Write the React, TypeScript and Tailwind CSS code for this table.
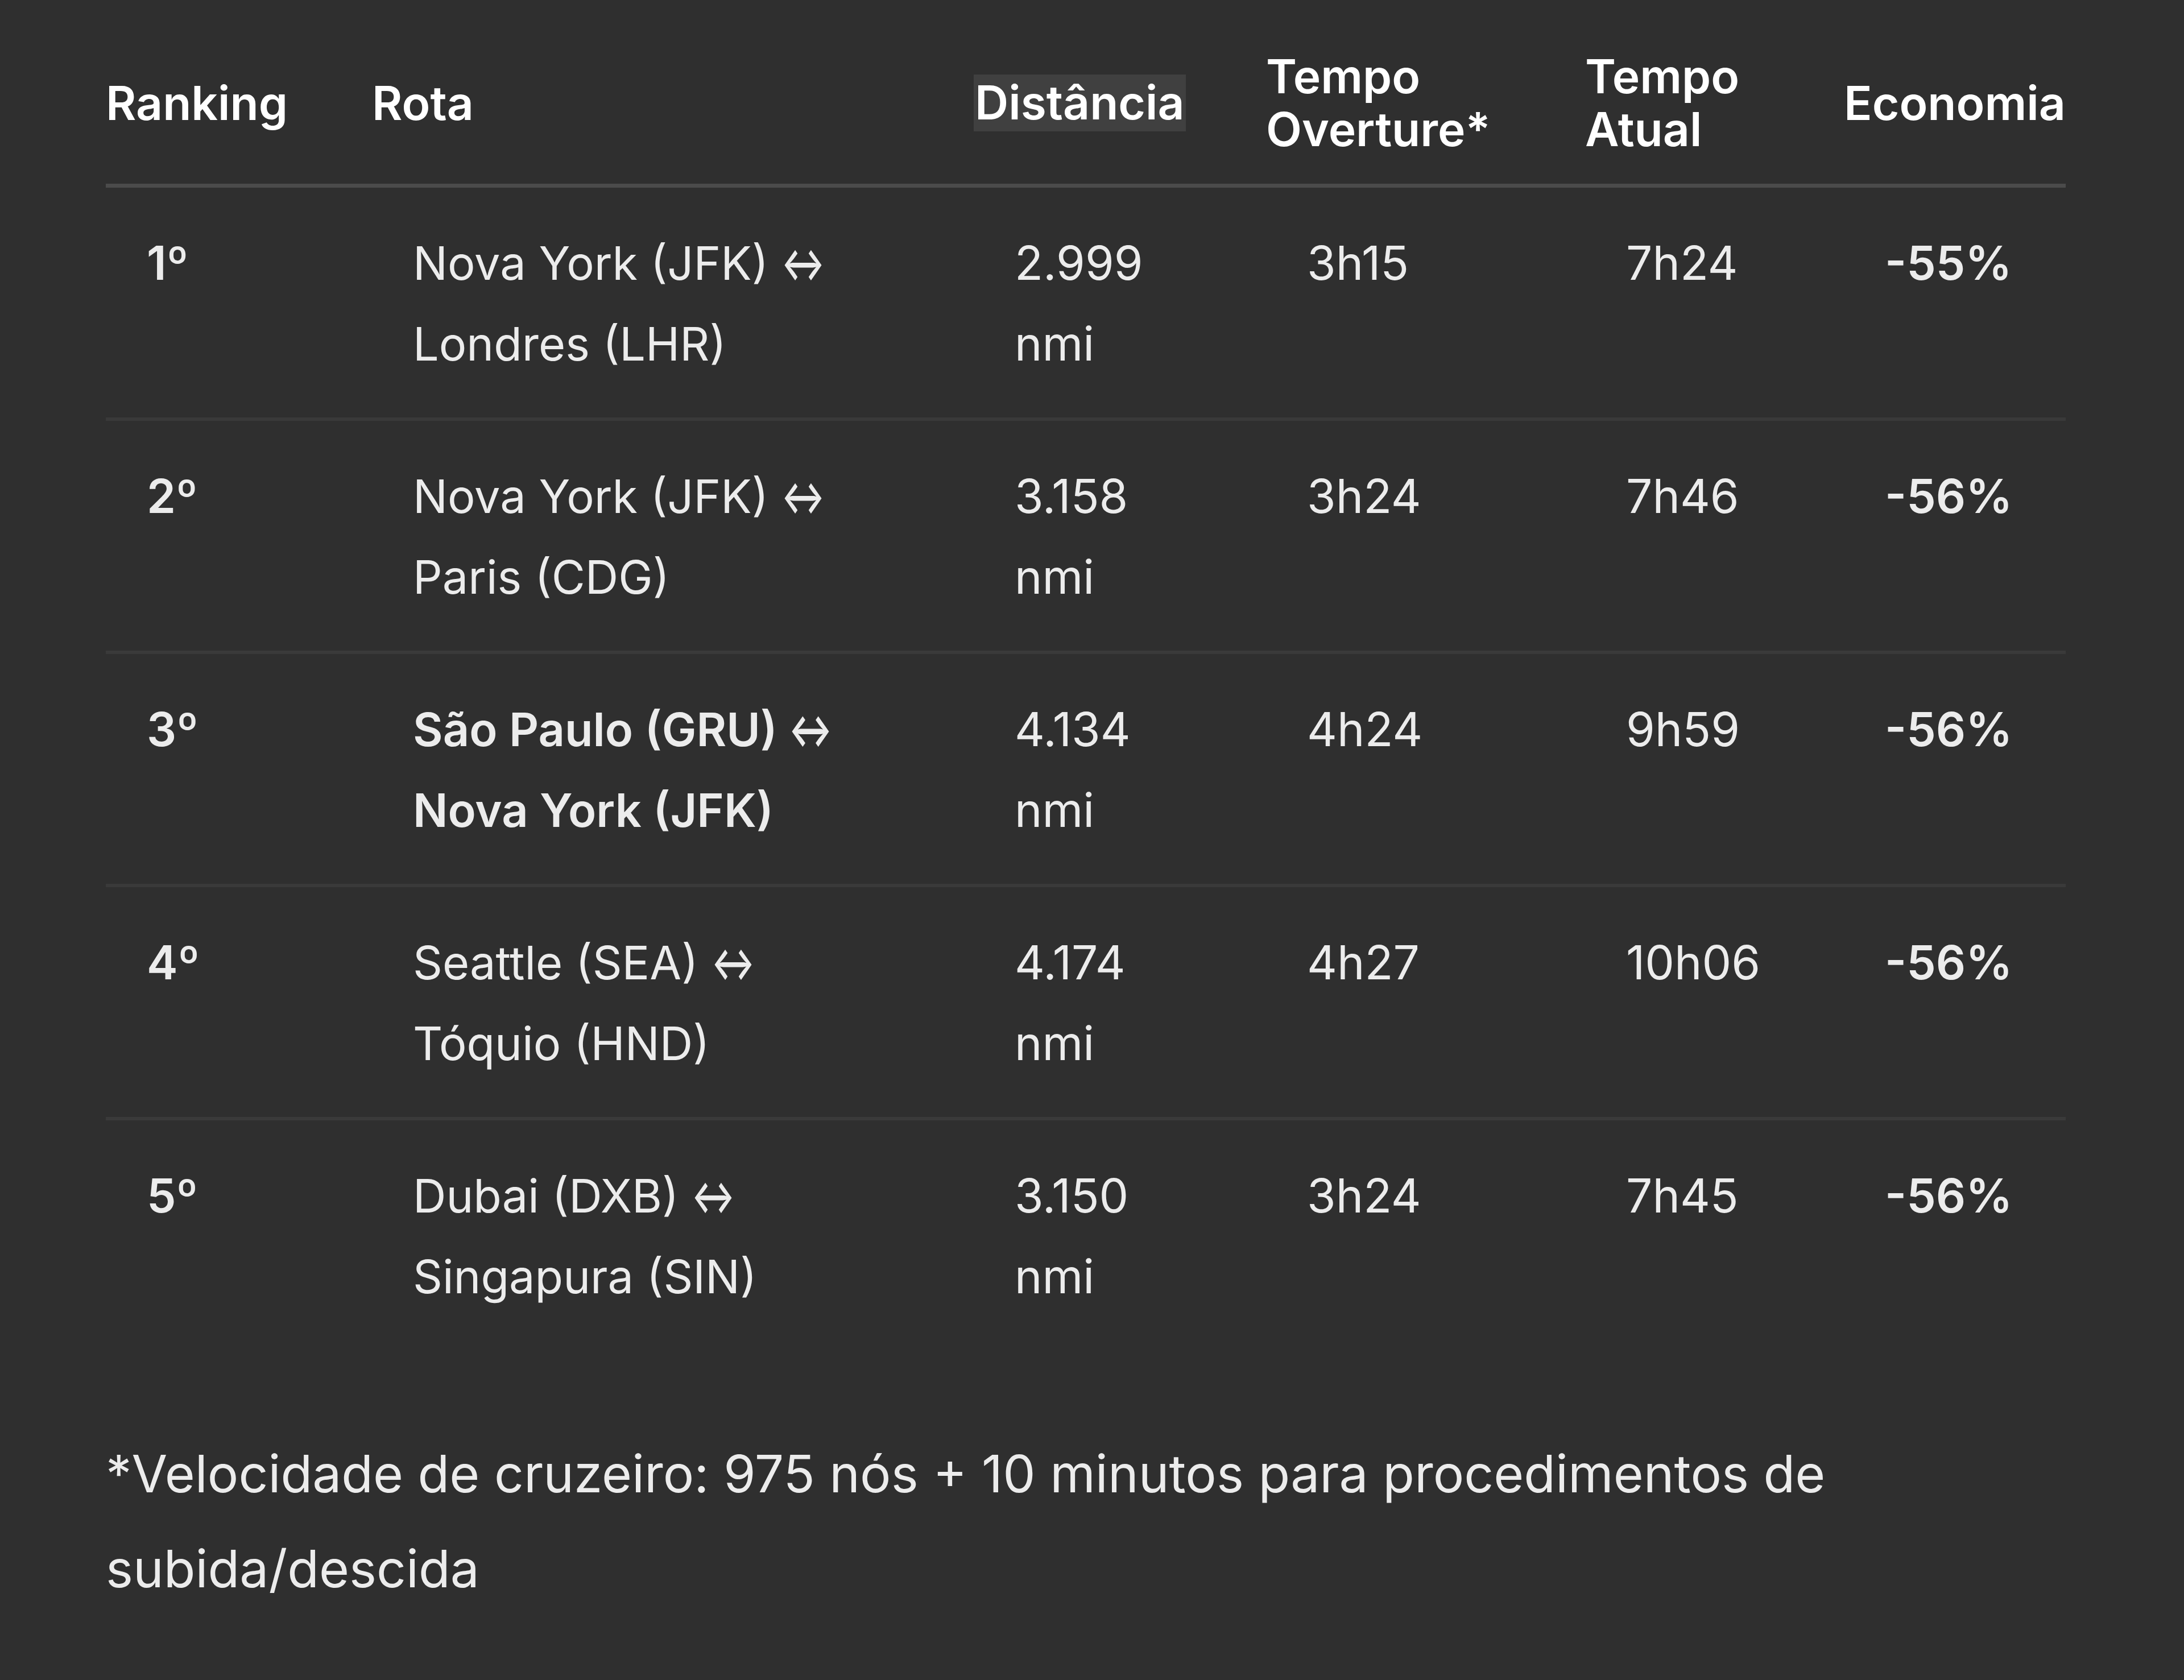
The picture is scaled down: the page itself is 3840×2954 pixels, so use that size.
const rows = [
  { rank: "1º", from: "Nova York (JFK)", to: "Londres (LHR)", dist: "2.999", over: "3h15", atual: "7h24", eco: "-55%" },
  { rank: "2º", from: "Nova York (JFK)", to: "Paris (CDG)", dist: "3.158", over: "3h24", atual: "7h46", eco: "-56%" },
  { rank: "3º", from: "São Paulo (GRU)", to: "Nova York (JFK)", dist: "4.134", over: "4h24", atual: "9h59", eco: "-56%", bold: true },
  { rank: "4º", from: "Seattle (SEA)", to: "Tóquio (HND)", dist: "4.174", over: "4h27", atual: "10h06", eco: "-56%" },
  { rank: "5º", from: "Dubai (DXB)", to: "Singapura (SIN)", dist: "3.150", over: "3h24", atual: "7h45", eco: "-56%" },
]

function App() {
  return (
    <div className="min-h-screen w-full bg-[#2f2f2f] pl-[186px] pt-[88px] text-[#ececec] font-['Inter',sans-serif]">
      <table className="table-fixed w-[3446px] border-collapse text-[82px]">
        <colgroup>
          <col className="w-[468px]" />
          <col className="w-[1058px]" />
          <col className="w-[514px]" />
          <col className="w-[561px]" />
          <col className="w-[455px]" />
          <col className="w-[390px]" />
        </colgroup>
        <thead>
          <tr className="border-b-[7px] border-[#4b4b4b]">
            <th className="text-left align-middle font-semibold leading-[93px] pb-[49px] text-white">Ranking</th>
            <th className="text-left align-middle font-semibold leading-[93px] pb-[49px] text-white">Rota</th>
            <th className="text-left align-middle font-semibold leading-[93px] pb-[49px] text-white">
              <span className="inline-block bg-[#404040] leading-[100px] px-[2px]">Distância</span>
            </th>
            <th className="text-left align-middle font-semibold leading-[93px] pb-[49px] text-white">Tempo<br />Overture*</th>
            <th className="text-left align-middle font-semibold leading-[93px] pb-[49px] text-white">Tempo<br />Atual</th>
            <th className="text-left align-middle font-semibold leading-[93px] pb-[49px] text-white">Economia</th>
          </tr>
        </thead>
        <tbody>
          {rows.map((r, i) => (
            <tr key={r.rank} className={i < rows.length - 1 ? "border-b-[6px] border-[#3a3a3a]" : ""}>
              <td className="align-top pl-[72px] pt-[62px] pb-[58px] leading-[142px] font-semibold">{r.rank}</td>
              <td className={"align-top pl-[72px] pt-[62px] pb-[58px] leading-[142px] text-[81px] " + (r.bold ? "font-semibold" : "font-normal")}>
                <div>
                  {r.from}{" "}
                  <span className={"inline-block origin-left scale-x-[0.7] mr-[-30px] " + (r.bold ? "font-bold" : "font-semibold")}>↔</span>
                </div>
                <div>{r.to}</div>
              </td>
              <td className="align-top pl-[72px] pt-[62px] pb-[58px] leading-[142px]">
                <div>{r.dist}</div>
                <div>nmi</div>
              </td>
              <td className="align-top pl-[72px] pt-[62px] pb-[58px] leading-[142px]">{r.over}</td>
              <td className="align-top pl-[72px] pt-[62px] pb-[58px] leading-[142px]">{r.atual}</td>
              <td className="align-top pl-[72px] pt-[62px] pb-[58px] leading-[142px] font-semibold">{r.eco}</td>
            </tr>
          ))}
        </tbody>
      </table>
      <p className="mt-[134px] w-[3446px] text-[91px] leading-[167px]">
        *Velocidade de cruzeiro: 975 nós + 10 minutos para procedimentos de subida/descida
      </p>
    </div>
  )
}

export default App
